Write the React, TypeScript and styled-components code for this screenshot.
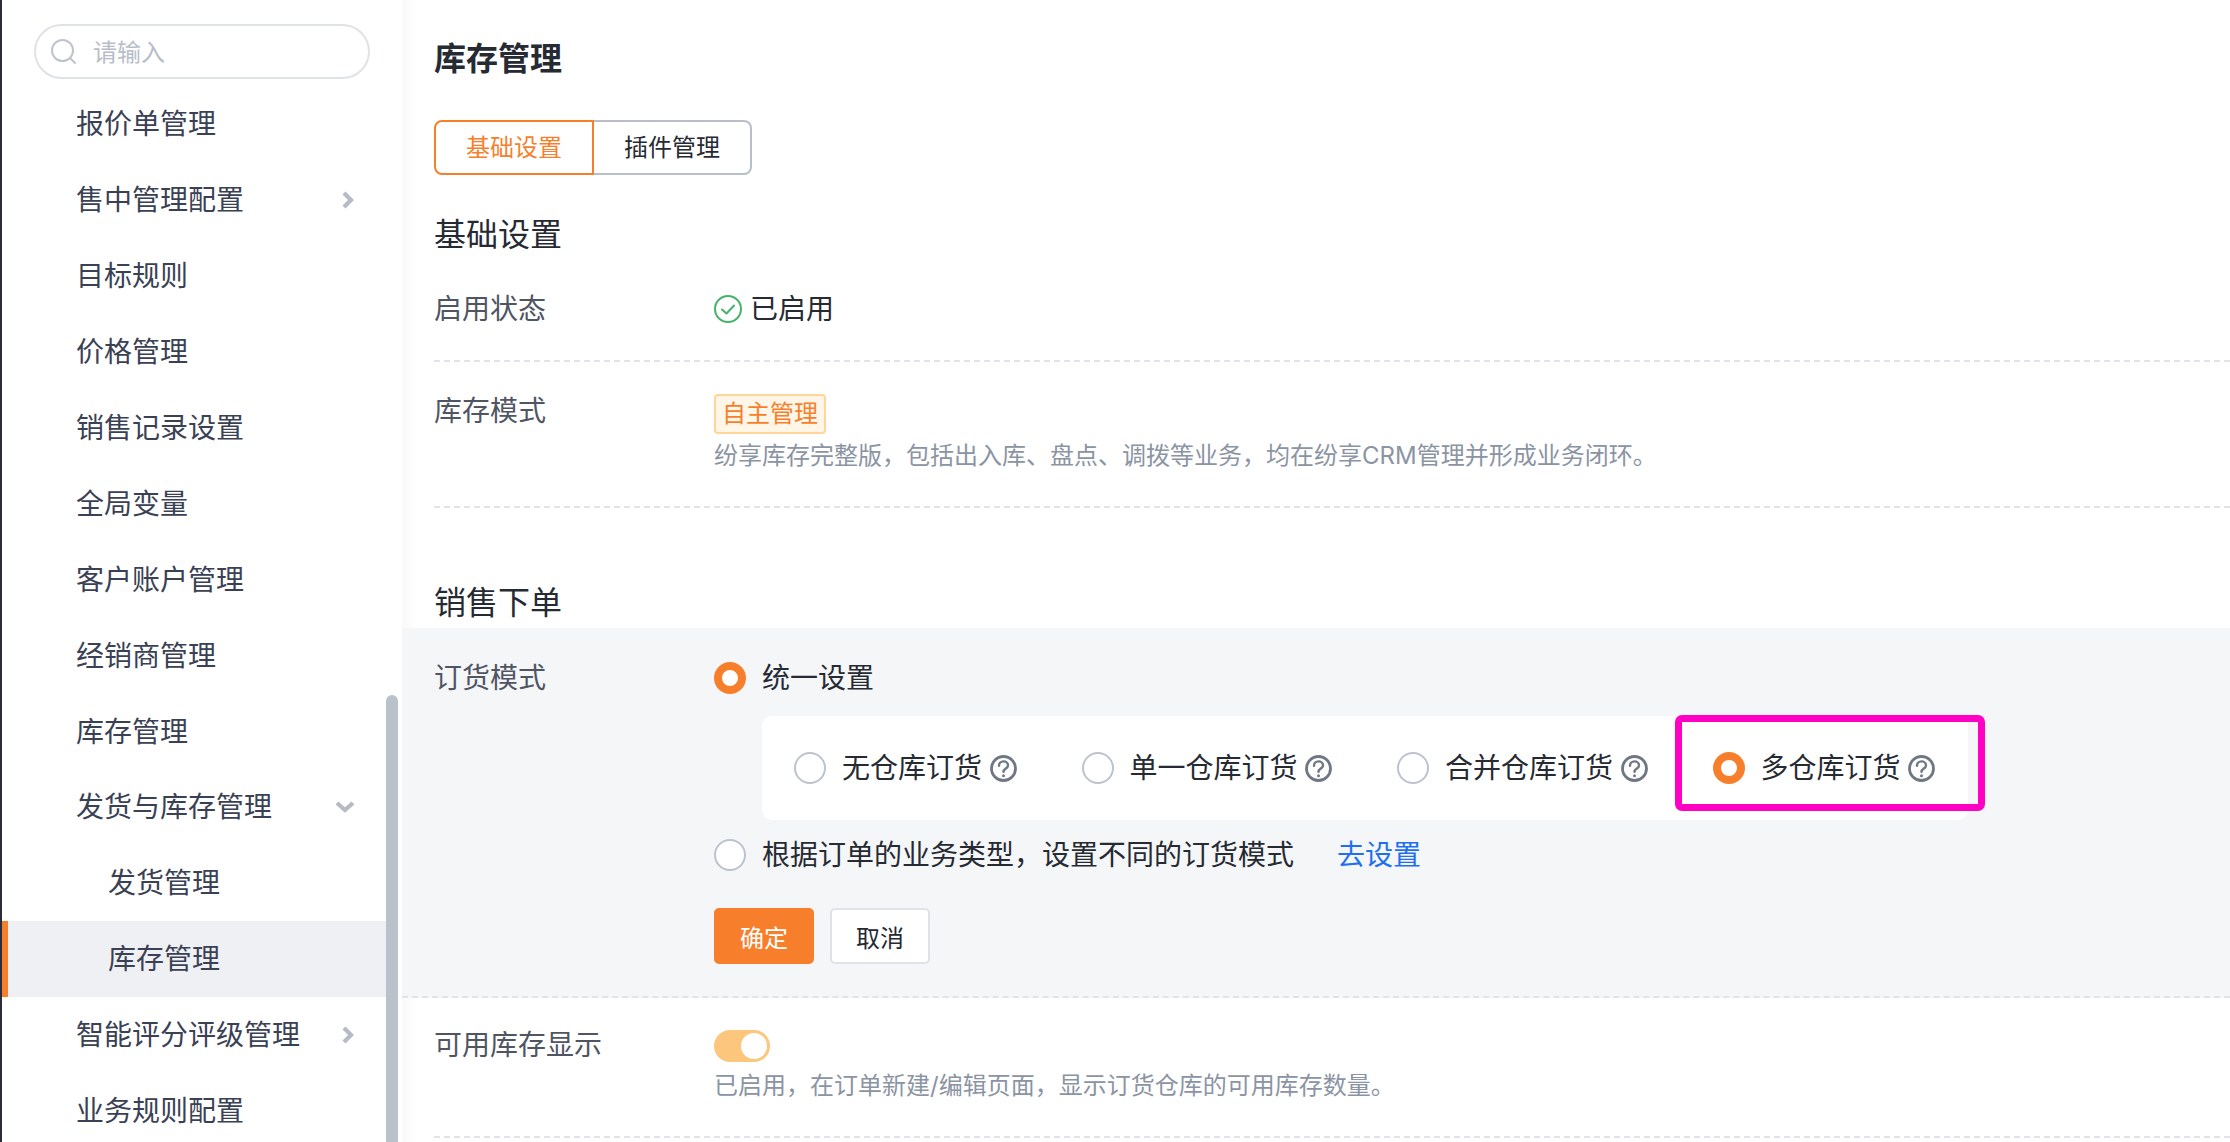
import React from 'react';
import styled, { createGlobalStyle } from 'styled-components';

const FONT = `Inter, "Noto Sans CJK SC", sans-serif`;

const GlobalStyle = createGlobalStyle`
  html, body {
    margin: 0;
    padding: 0;
    width: 2230px;
    height: 1142px;
    overflow: hidden;
    background: #fff;
    font-family: ${FONT};
  }
  * { box-sizing: border-box; }
`;

/* ── page shell ───────────────────────────── */
const Page = styled.div`
  display: flex;
  width: 2230px;
  height: 1142px;
  overflow: hidden;
`;

/* ── sidebar ──────────────────────────────── */
const Sidebar = styled.aside`
  position: relative;
  flex: 0 0 402px;
  height: 1142px;
  padding: 24px 16px 0 0;
  overflow: hidden;
  background: #fff;
  border-left: 2px solid #2a2d38;
`;

const Search = styled.div`
  display: flex;
  align-items: center;
  gap: 17px;
  width: 336px;
  height: 55px;
  margin-left: 32px;
  padding-left: 15px;
  border: 2px solid #dfe2e8;
  border-radius: 28px;
  color: #b8bdc7;
  font-size: 24px;
  line-height: 32px;
`;

const Placeholder = styled.span`
  margin-top: 2px;
`;

const Menu = styled.nav`
  margin-top: 7px;
`;

const MenuRow = styled.div<{ $sub?: boolean; $active?: boolean }>`
  display: flex;
  align-items: center;
  justify-content: space-between;
  height: 75.9px;
  padding-left: ${(p) => (p.$sub ? (p.$active ? 100 : 106) : 74)}px;
  padding-right: 31px;
  border-left: ${(p) => (p.$active ? '6px solid #f77f2c' : 'none')};
  background: ${(p) => (p.$active ? '#eff0f3' : 'transparent')};
  color: #3a4154;
  font-size: 28px;
`;

const MenuText = styled.span`
  margin-bottom: 3px;
`;

const Thumb = styled.div`
  position: absolute;
  top: 695px;
  left: 384px;
  bottom: -20px;
  width: 12px;
  border-radius: 6px;
  background: #b9c2cb;
`;

/* ── main panel ───────────────────────────── */
const Main = styled.main`
  flex: 1;
  min-width: 0;
  padding: 39px 0 0 32px;
  background: linear-gradient(to right, #f9f9fa, #fff 16px);
  color: #262a33;
`;

const Title = styled.h1`
  margin: 0;
  font-size: 32px;
  line-height: 40px;
  font-weight: 700;
  color: #262a33;
`;

const Tabs = styled.div`
  display: flex;
  margin-top: 41px;
`;

const Tab = styled.div<{ $active?: boolean }>`
  display: flex;
  align-items: center;
  justify-content: center;
  width: ${(p) => (p.$active ? 160 : 158)}px;
  height: 55px;
  padding-bottom: 4px;
  border: 2px solid ${(p) => (p.$active ? '#f77f2c' : '#b9bfca')};
  border-left-width: ${(p) => (p.$active ? 2 : 0)}px;
  border-radius: ${(p) => (p.$active ? '8px 0 0 8px' : '0 8px 8px 0')};
  color: ${(p) => (p.$active ? '#f77f2c' : '#262a33')};
  font-size: 24px;
`;

const Heading = styled.h2<{ $top: number; $bottom?: number }>`
  margin: ${(p) => p.$top}px 0 ${(p) => p.$bottom ?? 0}px;
  font-size: 32px;
  line-height: 40px;
  font-weight: 400;
  color: #262a33;
`;

const Row = styled.section<{ $pt: number; $pb?: number }>`
  display: flex;
  align-items: flex-start;
  padding: ${(p) => p.$pt}px 0 ${(p) => p.$pb ?? 32}px;
  border-bottom: 2px dashed #e1e3e9;
`;

const GreyRow = styled(Row)`
  margin-left: -32px;
  padding-left: 32px;
  background: #f5f6f8;
`;

const Label = styled.div`
  flex: 0 0 280px;
  color: #4f5563;
  font-size: 28px;
  line-height: 40px;
`;

const Value = styled.div`
  flex: 1;
  min-width: 0;
  font-size: 28px;
  line-height: 40px;
`;

const Status = styled.div`
  display: flex;
  align-items: center;
  gap: 8px;
`;

const Tag = styled.span`
  display: block;
  width: 112px;
  height: 40px;
  margin-top: 3px;
  border: 2px solid #ffd699;
  border-radius: 4px;
  background: #fff6e8;
  color: #f77f2c;
  font-size: 24px;
  line-height: 36px;
  text-align: center;
`;

const Hint = styled.div<{ $top: number }>`
  margin-top: ${(p) => p.$top}px;
  color: #8b94a3;
  font-size: 24px;
  line-height: 36px;
  white-space: nowrap;
`;

/* ── radios ───────────────────────────────── */
const RadioDot = styled.span<{ $on?: boolean }>`
  flex: 0 0 32px;
  width: 32px;
  height: 32px;
  border-radius: 50%;
  border: ${(p) => (p.$on ? '8.5px solid #f77f2c' : '2px solid #bcc2ce')};
  background: #fff;
`;

const RadioLine = styled.div<{ $top?: number }>`
  display: flex;
  align-items: center;
  gap: 16px;
  margin-top: ${(p) => p.$top ?? 0}px;
  white-space: nowrap;
`;

const ModeBox = styled.div`
  display: flex;
  align-items: center;
  gap: 65px;
  width: 1206px;
  height: 104px;
  margin: 18px 0 0 48px;
  padding-left: 32px;
  border-radius: 10px;
  background: #fff;
`;

const Mode = styled.label`
  display: flex;
  align-items: center;
  white-space: nowrap;
`;

const ModeText = styled.span`
  margin: 0 7.5px 0 16px;
`;

const Link = styled.a`
  margin-left: 27px;
  color: #1f70ee;
`;

const Highlight = styled.div`
  position: absolute;
  top: 715px;
  left: 1675px;
  width: 310px;
  height: 96px;
  border: 7px solid #ff00c4;
  border-radius: 7px;
  pointer-events: none;
`;

const Buttons = styled.div`
  display: flex;
  gap: 16px;
  margin-top: 33px;
`;

const Button = styled.button<{ $primary?: boolean }>`
  width: 100px;
  height: 56px;
  padding: 0;
  border: 2px solid ${(p) => (p.$primary ? '#f77f2c' : '#dfe2e8')};
  border-radius: 5px;
  background: ${(p) => (p.$primary ? '#f77f2c' : '#fff')};
  color: ${(p) => (p.$primary ? '#fff' : '#262a33')};
  font-family: ${FONT};
  font-size: 24px;
`;

const Toggle = styled.div`
  display: flex;
  align-items: center;
  justify-content: flex-end;
  width: 56px;
  height: 32px;
  margin-top: 5px;
  padding-right: 3px;
  border-radius: 16px;
  background: #fcc77c;
`;

const Knob = styled.span`
  width: 26px;
  height: 26px;
  border-radius: 50%;
  background: #fff;
`;

/* ── icons ────────────────────────────────── */
const SearchIcon = () => (
  <svg width="25" height="25" viewBox="0 0 25 25" fill="none" stroke="#bfc4cc" strokeWidth="2">
    <circle cx="11.5" cy="11.5" r="10.5" />
    <path d="M19 19l5 5" strokeLinecap="round" />
  </svg>
);

const ChevronRight = () => (
  <svg width="14" height="18" viewBox="0 0 14 18" fill="none" stroke="#b5bac4" strokeWidth="4.2">
    <path d="M3 2l7 7-7 7" />
  </svg>
);

const ChevronDown = () => (
  <svg width="20" height="14" viewBox="0 0 20 14" fill="none" stroke="#b5bac4" strokeWidth="4.2">
    <path d="M2 3l8 7 8-7" />
  </svg>
);

const CheckCircle = () => (
  <svg width="28" height="28" viewBox="0 0 28 28" fill="none" stroke="#45b36b" strokeWidth="2">
    <circle cx="14" cy="14" r="13" />
    <path d="M8 14.5l4.5 4L20 10.5" strokeLinecap="round" strokeLinejoin="round" />
  </svg>
);

const HelpIcon = () => (
  <svg width="27" height="27" viewBox="0 0 27 27" fill="none" stroke="#6f7785" strokeWidth="2.4">
    <circle cx="13.5" cy="13.5" r="12" strokeWidth="2.8" />
    <path d="M9 10.8c0-2.7 2-4.4 4.5-4.4s4.5 1.7 4.5 4c0 3.1-4.5 3.2-4.5 6.4" strokeLinecap="round" />
    <circle cx="13.5" cy="20.8" r="1.5" fill="#6f7785" stroke="none" />
  </svg>
);

const COMMA = '\uFF0C';

const menuItems: { text: string; sub?: boolean; active?: boolean; arrow?: 'right' | 'down' }[] = [
  { text: '报价单管理' },
  { text: '售中管理配置', arrow: 'right' },
  { text: '目标规则' },
  { text: '价格管理' },
  { text: '销售记录设置' },
  { text: '全局变量' },
  { text: '客户账户管理' },
  { text: '经销商管理' },
  { text: '库存管理' },
  { text: '发货与库存管理', arrow: 'down' },
  { text: '发货管理', sub: true },
  { text: '库存管理', sub: true, active: true },
  { text: '智能评分评级管理', arrow: 'right' },
  { text: '业务规则配置' },
];

const modes = [
  { text: '无仓库订货' },
  { text: '单一仓库订货' },
  { text: '合并仓库订货' },
  { text: '多仓库订货', on: true },
];

const App: React.FC = () => (
  <Page>
    <GlobalStyle />
    <Sidebar>
      <Search>
        <SearchIcon />
        <Placeholder>请输入</Placeholder>
      </Search>
      <Menu>
        {menuItems.map((item, i) => (
          <MenuRow key={i} $sub={item.sub} $active={item.active}>
            <MenuText>{item.text}</MenuText>
            {item.arrow === 'right' && <ChevronRight />}
            {item.arrow === 'down' && <ChevronDown />}
          </MenuRow>
        ))}
      </Menu>
      <Thumb />
    </Sidebar>

    <Main>
      <Title>库存管理</Title>
      <Tabs>
        <Tab $active>基础设置</Tab>
        <Tab>插件管理</Tab>
      </Tabs>

      <Heading $top={40}>基础设置</Heading>
      <Row $pt={34} $pb={31}>
        <Label>启用状态</Label>
        <Value>
          <Status>
            <CheckCircle />
            已启用
          </Status>
        </Value>
      </Row>
      <Row $pt={29}>
        <Label>库存模式</Label>
        <Value>
          <Tag>自主管理</Tag>
          <Hint $top={4}>{`纷享库存完整版${COMMA}包括出入库、盘点、调拨等业务${COMMA}均在纷享CRM管理并形成业务闭环。`}</Hint>
        </Value>
      </Row>

      <Heading $top={75} $bottom={5}>销售下单</Heading>
      <GreyRow $pt={30}>
        <Label>订货模式</Label>
        <Value>
          <RadioLine>
            <RadioDot $on />
            统一设置
          </RadioLine>
          <ModeBox>
            {modes.map((m) => (
              <Mode key={m.text}>
                <RadioDot $on={m.on} />
                <ModeText>{m.text}</ModeText>
                <HelpIcon />
              </Mode>
            ))}
          </ModeBox>
          <RadioLine $top={15}>
            <RadioDot />
            <span>{`根据订单的业务类型${COMMA}设置不同的订货模式`}</span>
            <Link>去设置</Link>
          </RadioLine>
          <Buttons>
            <Button $primary>确定</Button>
            <Button>取消</Button>
          </Buttons>
        </Value>
      </GreyRow>
      <Row $pt={27}>
        <Label>可用库存显示</Label>
        <Value>
          <Toggle>
            <Knob />
          </Toggle>
          <Hint $top={6}>{`已启用${COMMA}在订单新建/编辑页面${COMMA}显示订货仓库的可用库存数量。`}</Hint>
        </Value>
      </Row>
    </Main>
    <Highlight />
  </Page>
);

export default App;
